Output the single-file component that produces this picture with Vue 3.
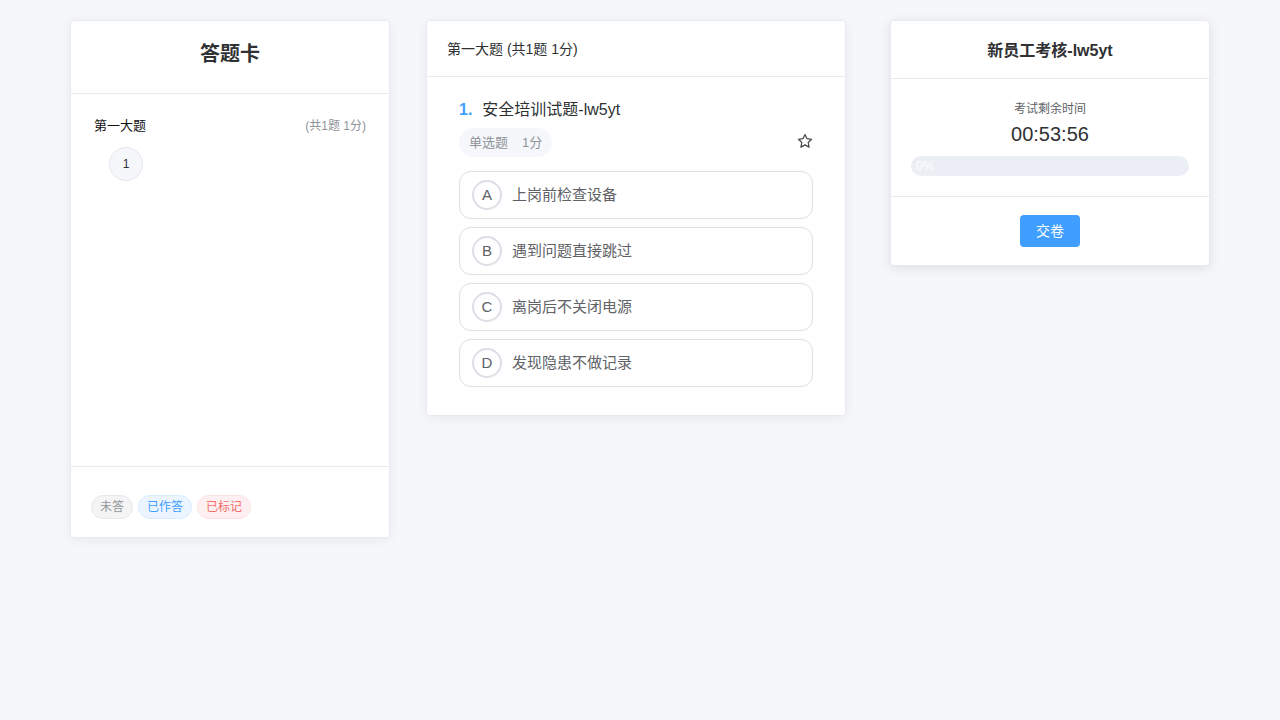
<script setup>
const options = [
  { key: "A", text: "上岗前检查设备" },
  { key: "B", text: "遇到问题直接跳过" },
  { key: "C", text: "离岗后不关闭电源" },
  { key: "D", text: "发现隐患不做记录" },
];
const percent = 0;
</script>

<template>
  <div class="page">
    <aside class="card sheet">
      <div class="sheet-head">答题卡</div>
      <div class="sheet-body">
        <div class="group-row">
          <span class="group-name">第一大题</span>
          <span class="group-count">(共1题 1分)</span>
        </div>
        <div class="num-list">
          <span class="num">1</span>
        </div>
      </div>
      <div class="sheet-foot">
        <span class="tag tag-gray">未答</span>
        <span class="tag tag-blue">已作答</span>
        <span class="tag tag-red">已标记</span>
      </div>
    </aside>

    <main class="card paper">
      <div class="paper-head">第一大题 (共1题 1分)</div>
      <div class="paper-body">
        <div class="q-title"><span class="q-no">1.</span>安全培训试题-lw5yt</div>
        <div class="q-meta">
          <span class="q-type"><span>单选题</span><span>1分</span></span>
          <svg class="star" viewBox="0 0 16 16" width="16" height="16">
            <path
              d="M8 1.5l2 4.2 4.6.6-3.4 3.2.9 4.6L8 11.9l-4.1 2.2.9-4.6-3.4-3.2 4.6-.6z"
              fill="none"
              stroke="#444"
              stroke-width="1.2"
              stroke-linejoin="round"
            />
          </svg>
        </div>
        <div v-for="o in options" :key="o.key" class="option">
          <span class="opt-key">{{ o.key }}</span>
          <span class="opt-text">{{ o.text }}</span>
        </div>
      </div>
    </main>

    <aside class="card side">
      <div class="side-head">新员工考核-lw5yt</div>
      <div class="side-body">
        <div class="time-label">考试剩余时间</div>
        <div class="time">00:53:56</div>
        <div class="progress">
          <span class="progress-text">{{ percent }}%</span>
        </div>
      </div>
      <div class="side-foot">
        <button class="submit" type="button">交卷</button>
      </div>
    </aside>
  </div>
</template>

<style>
html,
body {
  margin: 0;
  background: #f5f7fb;
}
</style>

<style scoped>
.page {
  display: flex;
  align-items: flex-start;
  width: 1140px;
  min-height: 720px;
  box-sizing: border-box;
  margin: 0 auto;
  padding-top: 20px;
  font-family: "Liberation Sans", "Noto Sans CJK SC", sans-serif;
  color: #303133;
}

.card {
  box-sizing: border-box;
  background: #fff;
  border: 1px solid #e8eaf1;
  border-radius: 4px;
  box-shadow: 0 2px 12px rgba(0, 0, 0, 0.06);
}

.sheet {
  width: 320px;
  height: 518px;
  display: flex;
  flex-direction: column;
}

.sheet-head {
  height: 73px;
  padding-top: 19px;
  box-sizing: border-box;
  border-bottom: 1px solid #e8eaf1;
  text-align: center;
  font-size: 20px;
  font-weight: 700;
  line-height: 28px;
}

.sheet-body {
  flex: 1;
  padding: 21px 23px 0;
}

.group-row {
  display: flex;
  justify-content: space-between;
  align-items: center;
  height: 20px;
}

.group-name {
  padding-bottom: 2px;
  color: #111;
  font-size: 13px;
}

.group-count {
  padding-bottom: 2px;
  color: #909399;
  font-size: 12px;
}

.num-list {
  display: flex;
  margin-top: 12px;
  padding-left: 15px;
}

.num {
  width: 34px;
  height: 34px;
  box-sizing: border-box;
  display: flex;
  align-items: center;
  justify-content: center;
  border: 1px solid #e4e7ed;
  border-radius: 50%;
  background: #f5f7fb;
  font-size: 12px;
}

.sheet-foot {
  height: 71px;
  box-sizing: border-box;
  border-top: 1px solid #e8eaf1;
  padding: 28px 20px 0;
  display: flex;
  align-items: flex-start;
  gap: 5px;
}

.tag {
  height: 24px;
  box-sizing: border-box;
  padding: 0 8px;
  border: 1px solid;
  border-radius: 12px;
  font-size: 12px;
  line-height: 22px;
}

.tag-gray {
  background: #f4f4f5;
  border-color: #e9e9eb;
  color: #909399;
}

.tag-blue {
  background: #ecf5ff;
  border-color: #d9ecff;
  color: #409eff;
}

.tag-red {
  background: #fef0f0;
  border-color: #fde2e2;
  color: #f56c6c;
}

.paper {
  width: 420px;
  margin-left: 36px;
}

.paper-head {
  height: 56px;
  box-sizing: border-box;
  padding-left: 20px;
  border-bottom: 1px solid #e8eaf1;
  font-size: 14px;
  line-height: 57px;
}

.paper-body {
  padding: 22px 32px 28px;
}

.q-title {
  font-size: 16px;
  line-height: 22px;
}

.q-no {
  margin-right: 10px;
  color: #409eff;
  font-weight: 700;
}

.q-meta {
  display: flex;
  justify-content: space-between;
  align-items: center;
  margin-top: 7px;
  margin-bottom: 14px;
}

.q-type {
  display: flex;
  gap: 14px;
  height: 29px;
  padding: 0 10px;
  background: #f5f7fb;
  border-radius: 15px;
  color: #909399;
  font-size: 13px;
  line-height: 30px;
}

.star {
  margin-top: -4px;
}

.option {
  display: flex;
  align-items: center;
  height: 48px;
  box-sizing: border-box;
  margin-bottom: 8px;
  padding-left: 12px;
  border: 1px solid #dcdfe6;
  border-radius: 12px;
}

.option:last-child {
  margin-bottom: 0;
}

.opt-key {
  width: 30px;
  height: 30px;
  box-sizing: border-box;
  display: flex;
  align-items: center;
  justify-content: center;
  padding-bottom: 2px;
  border: 2px solid #dcdfe6;
  border-radius: 50%;
  color: #606266;
  font-size: 15px;
}

.opt-text {
  margin-left: 10px;
  padding-bottom: 4px;
  color: #606266;
  font-size: 15px;
}

.side {
  width: 320px;
  margin-left: 44px;
  box-shadow: 0 2px 12px rgba(0, 0, 0, 0.1);
}

.side-head {
  height: 58px;
  box-sizing: border-box;
  border-bottom: 1px solid #e8eaf1;
  text-align: center;
  font-size: 16px;
  font-weight: 700;
  line-height: 59px;
}

.side-body {
  height: 118px;
  box-sizing: border-box;
  padding: 22px 20px 0;
  border-bottom: 1px solid #e8eaf1;
  text-align: center;
}

.time-label {
  font-size: 12px;
  line-height: 16px;
  color: #606266;
}

.time {
  margin-top: 3px;
  font-size: 20px;
  line-height: 28px;
}

.progress {
  height: 20px;
  margin-top: 8px;
  padding-left: 5px;
  background: #ebeef5;
  border-radius: 10px;
  color: #fff;
  font-size: 12px;
  line-height: 20px;
  text-align: left;
}

.side-foot {
  height: 68px;
  padding-top: 18px;
  box-sizing: border-box;
  text-align: center;
}

.submit {
  width: 60px;
  height: 32px;
  padding: 0 0 2px;
  border: none;
  border-radius: 4px;
  background: #409eff;
  color: #fff;
  font-family: inherit;
  font-size: 14px;
}
</style>
